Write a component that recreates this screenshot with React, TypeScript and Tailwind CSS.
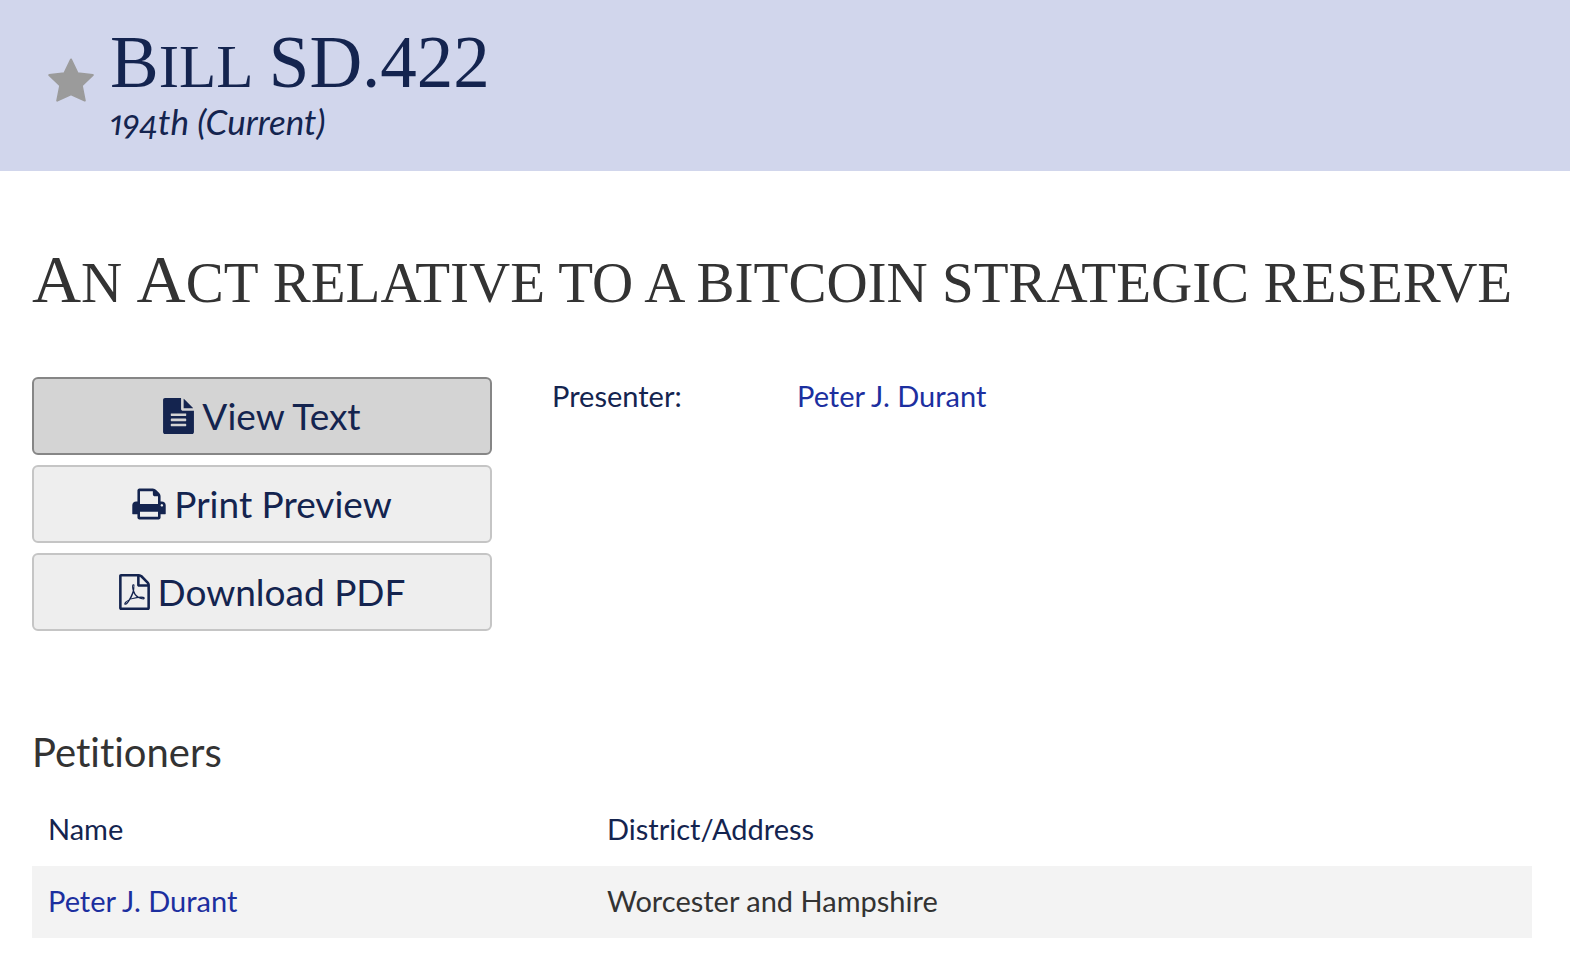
import type { ReactNode } from "react";

const petitioners = [{ name: "Peter J. Durant", district: "Worcester and Hampshire" }];

function StarIcon() {
  return (
    <svg viewBox="0 0 46 44" className="h-11 w-[46px]" aria-hidden="true">
      <path
        d="M23 1.5 L29.6 15.3 L44.8 17.1 L33.8 27.4 L36.8 42.6 L23 36.4 L9.2 42.6 L12.2 27.4 L1.2 17.1 L16.4 15.3 Z"
        fill="#9b9b9b"
        stroke="#9b9b9b"
        strokeWidth="2"
        strokeLinejoin="round"
      />
    </svg>
  );
}

function FileTextIcon() {
  return (
    <svg viewBox="128 0 1536 1792" className="h-9 w-[31px]" fill="currentColor" aria-hidden="true">
      <path d="M1596 476q14 14 28 36h-472v-472q22 14 36 28zm-476 164h544v1056q0 40-28 68t-68 28h-1344q-40 0-68-28t-28-68v-1600q0-40 28-68t68-28h800v544q0 40 28 68t68 28zm160 736v-64q0-14-9-23t-23-9h-704q-14 0-23 9t-9 23v64q0 14 9 23t23 9h704q14 0 23-9t9-23zm0-256v-64q0-14-9-23t-23-9h-704q-14 0-23 9t-9 23v64q0 14 9 23t23 9h704q14 0 23-9t9-23zm0-256v-64q0-14-9-23t-23-9h-704q-14 0-23 9t-9 23v64q0 14 9 23t23 9h704q14 0 23-9t9-23z" />
    </svg>
  );
}

function PrintIcon() {
  return (
    <svg viewBox="64 0 1664 1792" className="h-9 w-[34px]" fill="currentColor" aria-hidden="true">
      <path d="M448 1536h896v-256h-896v256zm0-640h896v-384h-160q-40 0-68-28t-28-68v-160h-640v640zm1152 64q0-26-19-45t-45-19-45 19-19 45 19 45 45 19 45-19 19-45zm128 0v416q0 13-9.5 22.5t-22.5 9.5h-224v160q0 40-28 68t-68 28h-960q-40 0-68-28t-28-68v-160h-224q-13 0-22.5-9.5t-9.5-22.5v-416q0-79 56.5-135.5t135.5-56.5h64v-544q0-40 28-68t68-28h672q40 0 88 20t76 48l152 152q28 28 48 76t20 88v256h64q79 0 135.5 56.5t56.5 135.5z" />
    </svg>
  );
}

function FilePdfIcon() {
  return (
    <svg viewBox="128 0 1536 1792" className="h-9 w-[31px]" fill="currentColor" aria-hidden="true">
      <path d="M1596 380q28 28 48 76t20 88v1152q0 40-28 68t-68 28h-1344q-40 0-68-28t-28-68v-1600q0-40 28-68t68-28h896q40 0 88 20t76 48zm-444-244v376h376q-10-29-22-41l-313-313q-12-12-41-22zm384 1528v-1024h-416q-40 0-68-28t-28-68v-416h-768v1536h1280zm-514-593q33 26 84 56 59-7 117-7 147 0 177 49 16 22 2 52 0 1-1 2l-2 2v1q-6 38-71 38-48 0-115-20t-130-53q-221 24-392 83-153 262-242 262-15 0-28-7l-24-12q-1-1-6-5-10-10-6-36 9-40 56-91.5t132-96.5q14-9 23 6 2 2 2 4 52-85 107-197 68-136 104-262-24-82-30.5-159.5t6.5-127.5q11-40 42-40h22q23 0 35 15 18 21 9 68-2 6-4 8 1 3 1 8v30q-2 123-14 192 55 164 146 238zm-576 411q52-24 137-158-51 40-87.5 84t-49.5 74zm398-920q-15 42-2 132 1-7 7-44 0-3 7-43 1-4 4-8-1-1-1-2t-1-2q-1-22-13-36 0 1-1 2v2zm-124 661q135-54 284-81-2-1-13-9.5t-16-13.5q-76-67-127-176-27 86-83 197-30 56-45 83zm646-16q-24-24-140-24 76 28 124 28 14 0 18-1 0-1-2-3z" />
    </svg>
  );
}

function ActionLink({ icon, active = false, children }: { icon: ReactNode; active?: boolean; children: ReactNode }) {
  return (
    <a
      href="#"
      className={`flex h-[78px] items-center justify-center gap-2 rounded-md border-2 text-[37px] text-[#14244f] ${
        active ? "border-[#868686] bg-[#d4d4d4]" : "border-[#c5c5c5] bg-[#eeeeee]"
      }`}
    >
      {icon}
      <span>{children}</span>
    </a>
  );
}

export default function App() {
  return (
    <div className="bg-white font-['Lato',sans-serif] text-[29px] leading-[38px] text-[#333333] [font-variant-ligatures:none]">
      <header className="flex items-start bg-[#d1d6ec] px-12 pt-7 pb-[31px] text-[#14244f]">
        <button type="button" aria-label="Add to favorites" className="mt-[30px] mr-4">
          <StarIcon />
        </button>
        <div>
          <h1 className="font-['Liberation_Serif',serif] text-[61px] leading-[70px] uppercase">
            <span className="inline-block first-letter:text-[73px]">Bill</span>{" "}
            <span className="text-[73px]">SD.422</span>
          </h1>
          <p className="text-[35px] italic [font-feature-settings:'onum','pnum']">194th (Current)</p>
        </div>
      </header>

      <main className="pr-[38px] pb-[26px] pl-8">
        <h2 className="pt-[74px] font-['Liberation_Serif',serif] text-[57px] leading-[68px] uppercase">
          <span className="inline-block first-letter:text-[68px]">An</span>{" "}
          <span className="inline-block first-letter:text-[68px]">Act</span> relative to a bitcoin strategic reserve
        </h2>

        <div className="mt-[60px] flex gap-15">
          <nav aria-label="Bill actions" className="flex w-[460px] flex-col gap-[10px]">
            <ActionLink icon={<FileTextIcon />} active>
              View Text
            </ActionLink>
            <ActionLink icon={<PrintIcon />}>Print Preview</ActionLink>
            <ActionLink icon={<FilePdfIcon />}>Download PDF</ActionLink>
          </nav>
          <dl className="flex">
            <dt className="w-[245px] text-[#14244f]">Presenter:</dt>
            <dd>
              <a href="#" className="text-[#1c2f9f]">
                Peter J. Durant
              </a>
            </dd>
          </dl>
        </div>

        <h3 className="mt-[97px] text-[40px] leading-[48px]">Petitioners</h3>
        <table className="mt-[18px] w-full table-fixed text-left">
          <thead className="text-[#14244f]">
            <tr>
              <th className="w-[559px] px-4 pt-4 pb-[18px] font-normal">Name</th>
              <th className="px-4 pt-4 pb-[18px] font-normal">District/Address</th>
            </tr>
          </thead>
          <tbody>
            {petitioners.map((p) => (
              <tr key={p.name} className="bg-[#f3f3f3]">
                <td className="px-4 pt-4 pb-[18px]">
                  <a href="#" className="text-[#1c2f9f]">
                    {p.name}
                  </a>
                </td>
                <td className="px-4 pt-4 pb-[18px]">{p.district}</td>
              </tr>
            ))}
          </tbody>
        </table>
      </main>
    </div>
  );
}
